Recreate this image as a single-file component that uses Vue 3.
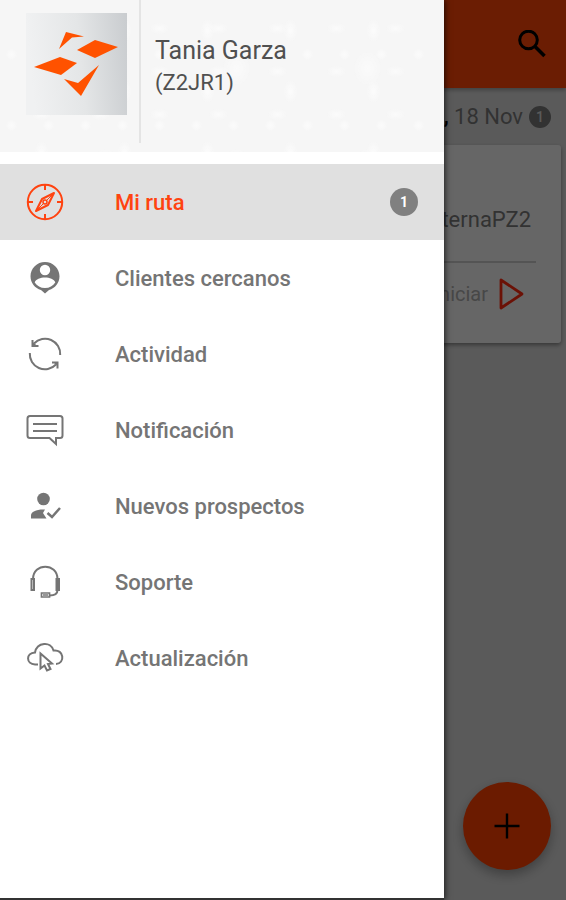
<script setup>
import { ref } from "vue";

const active = ref("ruta");
const stops = ref(1);

const menu = [
  { id: "ruta", label: "Mi ruta", badge: true },
  { id: "clientes", label: "Clientes cercanos" },
  { id: "actividad", label: "Actividad" },
  { id: "notificacion", label: "Notificación" },
  { id: "prospectos", label: "Nuevos prospectos" },
  { id: "soporte", label: "Soporte" },
  { id: "actualizacion", label: "Actualización" },
];
</script>

<template>
  <div class="screen">
    <div class="page">
      <header class="topbar">
        <button class="search" aria-label="Buscar">
          <svg width="28" height="28" viewBox="0 0 28 28" fill="none" stroke="#000">
            <circle cx="10.5" cy="10" r="8.8" stroke-width="3" />
            <path d="M17 16.500l9.500 9.500" stroke-width="3.600" />
          </svg>
        </button>
      </header>
      <main>
        <div class="day">
          <span><b>Lun,</b> 18 Nov</span>
          <span class="count">{{ stops }}</span>
        </div>
        <section class="card">
          <div class="client">ExternaPZ2</div>
          <button class="start">
            Iniciar
            <svg width="26" height="32" viewBox="0 0 26 32">
              <path d="M3 2v28l21-14z" fill="none" stroke="#ff2a10" stroke-width="2.800" stroke-linejoin="round" />
            </svg>
          </button>
        </section>
      </main>
      <button class="fab" aria-label="Agregar">
        <svg width="26" height="26" viewBox="0 0 26 26">
          <path d="M13 0.500v25M0.500 13h25" stroke="#000" stroke-width="2.400" />
        </svg>
      </button>
    </div>

    <div class="scrim"></div>

    <aside class="drawer">
      <div class="profile">
        <svg class="logo" width="101" height="102" viewBox="0 0 101 102">
          <defs>
            <linearGradient id="silver" x1="0" y1="0.1" x2="1" y2="0">
              <stop offset="0" stop-color="#f0f1f2" />
              <stop offset="0.5" stop-color="#e4e6e7" />
              <stop offset="1" stop-color="#c9cccf" />
            </linearGradient>
          </defs>
          <rect width="101" height="102" fill="url(#silver)" />
          <g fill="#ff5200">
            <path d="M33 36l7-17 18 4.500-12 1z" />
            <path d="M51 37l18-10 23 7-23 11z" />
            <path d="M8 54l26-10 17 6-16 12z" />
            <path d="M38 66l14 4 21-18-18 31z" />
          </g>
        </svg>
        <div class="who">
          <div class="name">Tania Garza</div>
          <div class="code">(Z2JR1)</div>
        </div>
      </div>

      <nav class="menu">
        <button
          v-for="item in menu"
          :key="item.id"
          class="item"
          :class="{ active: active === item.id }"
          @click="active = item.id"
        >
          <svg class="icon" width="40" height="40" viewBox="0 0 40 40" fill="none" stroke="currentColor" stroke-width="2">
            <g v-if="item.id === 'ruta'">
              <circle cx="20" cy="20" r="17.200" />
              <path d="M20 3v5M20 32v5M3 20h5M32 20h5" />
              <path d="M29 11l-6 12-12 6 6-12z" stroke-linejoin="round" />
              <circle cx="20" cy="20" r="2" stroke-width="1.500" />
              <path d="M21.500 18.500L28 12M18.500 21.500L12 28" stroke-width="1" />
            </g>
            <path
              v-else-if="item.id === 'clientes'"
              d="M20 4C12 4 5.500 10.300 5.500 18.300c0 6.700 4.500 12 10.500 13.700l4 3.500 4-3.500c6-1.700 10.500-7 10.500-13.700C34.500 10.300 28 4 20 4zM20 6.800a5.200 5.200 0 1 1 0 10.400 5.200 5.200 0 0 1 0-10.400zM20 30c-4.500 0-8-2-10.300-5.500 1-3.500 5.800-5 10.300-5s9.300 1.500 10.300 5C28 28 24.500 30 20 30z"
              fill="currentColor"
              fill-rule="evenodd"
              stroke="none"
            />
            <g v-else-if="item.id === 'actividad'">
              <path d="M9 9.500A15.200 15.200 0 0 1 35.200 21M31 30.500A15.200 15.200 0 0 1 4.800 19" />
              <path d="M7.500 6v6h6M27 28.500h5.500v6" />
              <path d="M7.500 8v4h5zM32.500 32v-3.500h-4z" fill="currentColor" stroke="none" />
            </g>
            <g v-else-if="item.id === 'notificacion'">
              <path d="M5 6h30q2.500 0 2.500 2.500v17q0 2.500-2.500 2.500h-4v6L24.500 28H5q-2.500 0-2.500-2.500v-17Q2.500 6 5 6z" />
              <path d="M8 14h24M8 21h24" />
            </g>
            <g v-else-if="item.id === 'prospectos'">
              <circle cx="18.500" cy="13" r="6.300" fill="currentColor" stroke="none" />
              <path d="M6 32.500v-3c0-4 6-6.500 14-6l-2 3.500 3.500 5.500z" fill="currentColor" stroke="none" />
              <path d="M22.500 27l4.500 4 8-9" stroke-width="2.500" />
            </g>
            <g v-else-if="item.id === 'soporte'">
              <path d="M8 17C8 0.500 32.500 0.500 32.500 17v11c0 4-3 5.500-8 5.500" />
              <path d="M6.500 17h2.500v11h-2.500zM31.500 17h2.500v11h-2.500z" />
              <path d="M16.500 31h8v4h-8zM18 33h5" stroke-width="1.700" />
            </g>
            <g v-else>
              <path d="M13 26.500h-3C1 26 0.500 15 10 14.500 12 4 26 3 28.500 12.500 39 11 40.500 25.500 31 26" />
              <path d="M15.500 15.500v15l4-3 2.500 5 3.500-1.500-2.500-5 4-.5z" />
            </g>
          </svg>
          <span class="label">{{ item.label }}</span>
          <span v-if="item.badge" class="badge">{{ stops }}</span>
        </button>
      </nav>
    </aside>
  </div>
</template>

<style>
body {
  margin: 0;
}
</style>

<style scoped>
.screen {
  position: relative;
  min-height: 100vh;
  display: flex;
  font-family: Roboto, sans-serif;
  overflow: hidden;
}
button {
  border: 0;
  padding: 0;
  background: none;
  font-family: inherit;
}
.page {
  flex: 1;
  display: flex;
  flex-direction: column;
  background: #d7d7d7;
}
.topbar {
  display: flex;
  justify-content: flex-end;
  align-items: center;
  height: 88px;
  padding-right: 20px;
  background: #ff4608;
  box-shadow: 0 2px 4px rgba(0, 0, 0, 0.3);
}
.search,
.fab,
.start {
  display: flex;
  align-items: center;
  justify-content: center;
}
main {
  flex: 1;
}
.day {
  display: flex;
  justify-content: flex-end;
  align-items: center;
  gap: 6px;
  height: 57px;
  padding-right: 15px;
  font-size: 22px;
  color: #777;
}
.day b {
  color: #000;
  font-weight: 500;
}
.count {
  width: 22px;
  border-radius: 50%;
  background: #777;
  color: #d7d7d7;
  font-size: 14px;
  font-weight: 500;
  line-height: 22px;
  text-align: center;
}
.card {
  margin: 0 5px;
  border-radius: 3px;
  background: #f3f3f3;
  box-shadow: 0 2px 4px rgba(0, 0, 0, 0.4);
  padding: 34px 25px 0;
}
.client {
  padding: 24px 5px 24px 0;
  border-bottom: 2px solid #c8c8c8;
  font-size: 22px;
  line-height: 34px;
  text-align: right;
  color: #777;
}
.start {
  margin-left: auto;
  padding-right: 12px;
  gap: 10px;
  height: 80px;
  padding-bottom: 18px;
  box-sizing: border-box;
  font-size: 20px;
  color: #aaa;
}
.fab {
  align-self: flex-end;
  width: 88px;
  height: 88px;
  margin: 0 15px 30px;
  border-radius: 50%;
  background: #ff4000;
  box-shadow: 0 5px 12px rgba(0, 0, 0, 0.3);
}
.scrim {
  position: absolute;
  inset: 0;
  background: rgba(0, 0, 0, 0.58);
}
.drawer {
  position: absolute;
  top: 0;
  bottom: 0;
  left: 0;
  width: calc(100% - 122px);
  max-width: 480px;
  box-sizing: border-box;
  border-bottom: 2px solid #333;
  background: #fff;
  box-shadow: 1px 0 6px rgba(0, 0, 0, 0.7);
}
.profile {
  display: flex;
  height: 152px;
  padding-left: 26px;
  background:
    radial-gradient(ellipse 7px 12px, rgba(255, 255, 255, 0.6), transparent) 0 0 / 83px 61px,
    radial-gradient(ellipse 10px 6px, rgba(255, 255, 255, 0.5), transparent) 12px 7px / 59px 43px,
    radial-gradient(ellipse 6px 6px, rgba(255, 255, 255, 0.6), transparent) 30px 19px / 37px 71px,
    radial-gradient(ellipse 14px 18px, rgba(255, 255, 255, 0.5), transparent) 40px 20px / 131px 97px,
    #f6f6f6;
}
.logo {
  margin-top: 13px;
}
.who {
  height: 143px;
  margin-left: 12px;
  padding: 35px 0 0 14px;
  border-left: 2px solid #e4e4e4;
  box-sizing: border-box;
  color: #505050;
}
.name {
  font-size: 25px;
  line-height: 32px;
}
.code {
  font-size: 22px;
  line-height: 32px;
}
.menu {
  display: flex;
  flex-direction: column;
  padding-top: 12px;
}
.item {
  display: flex;
  align-items: center;
  height: 76px;
  padding: 0 26px 0 25px;
  color: #757575;
  font-size: 22px;
  font-weight: 500;
  text-align: left;
}
.item.active {
  background: #e0e0e0;
  color: #ff4310;
}
.label {
  flex: 1;
  margin-left: 50px;
}
.badge {
  width: 28px;
  border-radius: 50%;
  background: #808080;
  color: #fff;
  font-size: 14px;
  font-weight: 700;
  line-height: 28px;
  text-align: center;
}
</style>
